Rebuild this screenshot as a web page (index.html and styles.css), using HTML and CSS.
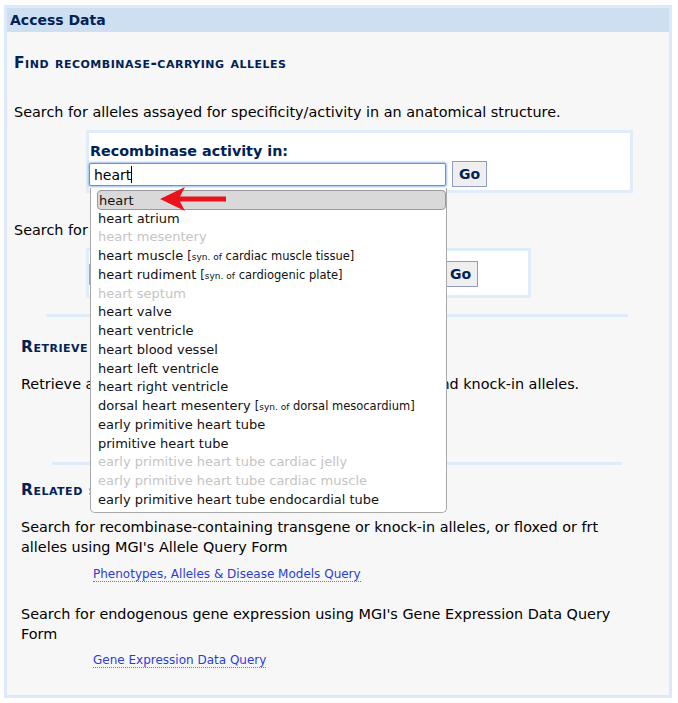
FILE: index.html
```html
<!DOCTYPE html>
<html lang="en">
<head>
    <meta charset="UTF-8">
    <title>Access Data</title>
    <link rel="stylesheet" href="styles.css">
</head>
<body>
<div class="panel">
    <div class="panel-head">Access Data</div>
    <div class="panel-body">
        <h3 class="sect sect-top">Find recombinase-carrying alleles</h3>
        <p class="txt">Search for alleles assayed for specificity/activity in an anatomical structure.</p>
        <div class="qbox">
            <div class="qlabel">Recombinase activity in:</div>
            <div class="qrow">
                <div class="ac">
                    <input class="qinput" type="text" value="heart">
                    <span class="caret"></span>
                    <ul class="ac-list">
                        <li class="ac-item sel">heart
                            <svg class="arrow" width="70" height="28" viewBox="0 0 70 28">
                                <path d="M2 14 L27 2 L22 11.5 L68 11.5 L68 16.5 L22 16.5 L27 26 Z" fill="#e8141b"/>
                            </svg>
                        </li>
                        <li class="ac-item">heart atrium</li>
                        <li class="ac-item off">heart mesentery</li>
                        <li class="ac-item">heart muscle <span class="syn">[<small>syn. of</small> cardiac muscle tissue]</span></li>
                        <li class="ac-item">heart rudiment <span class="syn">[<small>syn. of</small> cardiogenic plate]</span></li>
                        <li class="ac-item off">heart septum</li>
                        <li class="ac-item">heart valve</li>
                        <li class="ac-item">heart ventricle</li>
                        <li class="ac-item">heart blood vessel</li>
                        <li class="ac-item">heart left ventricle</li>
                        <li class="ac-item">heart right ventricle</li>
                        <li class="ac-item">dorsal heart mesentery <span class="syn">[<small>syn. of</small> dorsal mesocardium]</span></li>
                        <li class="ac-item">early primitive heart tube</li>
                        <li class="ac-item">primitive heart tube</li>
                        <li class="ac-item off">early primitive heart tube cardiac jelly</li>
                        <li class="ac-item off">early primitive heart tube cardiac muscle</li>
                        <li class="ac-item">early primitive heart tube endocardial tube</li>
                    </ul>
                </div>
                <button class="go">Go</button>
            </div>
        </div>
        <p class="txt txt-gap">Search for alleles by the recombinase driver gene.</p>
        <div class="qbox qbox-sm">
            <div class="qrow">
                <input class="qinput qinput-sm" type="text">
                <button class="go">Go</button>
            </div>
        </div>
        <div class="sep"></div>
        <div class="sub">
            <h3 class="sect">Retrieve all recombinase alleles</h3>
            <p class="txt">Retrieve all of recombinase-containing transgene alleles and knock-in alleles.</p>
            <a class="qlink" href="#">All recombinase alleles</a>
        </div>
        <div class="sep sep-2"></div>
        <div class="sub sub-related">
            <h3 class="sect">Related searches</h3>
            <p class="txt">Search for recombinase-containing transgene or knock-in alleles, or floxed or frt alleles using MGI's Allele Query Form</p>
            <a class="qlink" href="#">Phenotypes, Alleles &amp; Disease Models Query</a>
            <p class="txt">Search for endogenous gene expression using MGI's Gene Expression Data Query Form</p>
            <a class="qlink" href="#">Gene Expression Data Query</a>
        </div>
    </div>
</div>
</body>
</html>
```
FILE: styles.css
```css
body {
    margin: 0;
    background: #fff;
    font-family: "DejaVu Sans", Verdana, sans-serif;
    color: #000;
}
.panel {
    margin: 5px 0 0 4px;
    width: 662px;
    height: 687px;
    border: 3px solid #dde9f8;
    background: #f7f7f7;
}
.panel-head {
    height: 24px;
    line-height: 25px;
    background: #cddff0;
    color: #002255;
    font-weight: bold;
    font-size: 14px;
    padding-left: 3px;
}
.panel-body {
    padding: 0 0 0 7px;
}
.sect {
    margin: 0;
    font-size: 15.5px;
    line-height: 18px;
    font-variant: small-caps;
    font-weight: bold;
    color: #002255;
    letter-spacing: 0.5px;
}
.sect-top {
    padding-top: 22px;
    height: 48px;
}
.txt {
    margin: 0;
    font-size: 14.4px;
    line-height: 20px;
}
.txt-gap {
    margin-top: 27px;
}
.qbox {
    margin: 8px 0 0 72px;
    width: 541px;
    height: 57px;
    border: 3px solid #e0ecfa;
    background: #fff;
}
.qlabel {
    margin: 10px 0 0 1px;
    font-size: 14.3px;
    font-weight: bold;
    color: #002255;
    line-height: 16px;
}
.qrow {
    display: flex;
    align-items: center;
    gap: 6px;
    margin-top: 2px;
}
.ac {
    position: relative;
}
.qinput {
    display: block;
    box-sizing: border-box;
    width: 357px;
    height: 23px;
    margin: 0;
    border: 1px solid #6c93c6;
    border-radius: 2px;
    box-shadow: 0 0 2px 1px #9ec0ea;
    padding: 1px 4px 0;
    font-family: inherit;
    font-size: 14px;
    color: #000;
    outline: none;
}
.caret {
    position: absolute;
    left: 42px;
    top: 3px;
    width: 1px;
    height: 17px;
    background: #000;
}
.go {
    box-sizing: border-box;
    width: 35px;
    height: 26px;
    padding: 0;
    background: #efefef;
    border: 1px solid #8e9dc0;
    font-family: inherit;
    font-size: 14px;
    font-weight: bold;
    color: #002255;
}
.qbox-sm {
    margin-top: 8px;
    width: 439px;
    height: 44px;
}
.qbox-sm .qrow {
    margin-top: 10px;
}
.qinput-sm {
    width: 348px;
    box-shadow: none;
    border-color: #aaa;
}
.ac-list {
    position: absolute;
    left: 1px;
    top: 25px;
    z-index: 2;
    box-sizing: border-box;
    width: 357px;
    margin: 0;
    padding: 2px 0 2px 7px;
    list-style: none;
    background: #fff;
    border: 1px solid #a9a9a9;
    border-top: none;
    border-radius: 0 0 5px 5px;
    font-size: 13px;
    color: #111;
}
.ac-item {
    height: 18.75px;
    line-height: 18.75px;
    white-space: nowrap;
}
.ac-item.sel {
    position: relative;
    height: 20px;
    line-height: 19px;
    margin: 0 0 0 -1px;
    padding-left: 1px;
    box-sizing: border-box;
    background: #d9d9d9;
    border: 1px solid #999;
    border-radius: 4px;
}
.arrow {
    position: absolute;
    left: 60px;
    top: -6px;
}
.ac-item.off {
    color: #c4c4c4;
}
.syn {
    font-size: 11.5px;
}
.syn small {
    font-size: 9px;
}
.sep {
    margin: 16px 0 0 32px;
    width: 582px;
    height: 3px;
    background: #dfeafa;
}
.sep-2 {
    margin: 44px 0 0 38px;
    width: 570px;
}
.sub {
    padding-left: 7px;
}
.sub .sect {
    padding-top: 21px;
    height: 36px;
}
.sub-related .sect {
    padding-top: 16px;
}
.sub .txt {
    width: 612px;
}
.qlink {
    display: inline-block;
    margin: 10px 0 0 72px;
    font-size: 12px;
    line-height: 14px;
    color: #2a3dd6;
    text-decoration: none;
    border-bottom: 1px dotted #778;
}
.qlink + .txt {
    margin-top: 22px;
}
.txt + .qlink {
    margin-top: 9px;
}
.sub-related .txt:first-of-type + .qlink {
    margin-top: 10px;
}
```
